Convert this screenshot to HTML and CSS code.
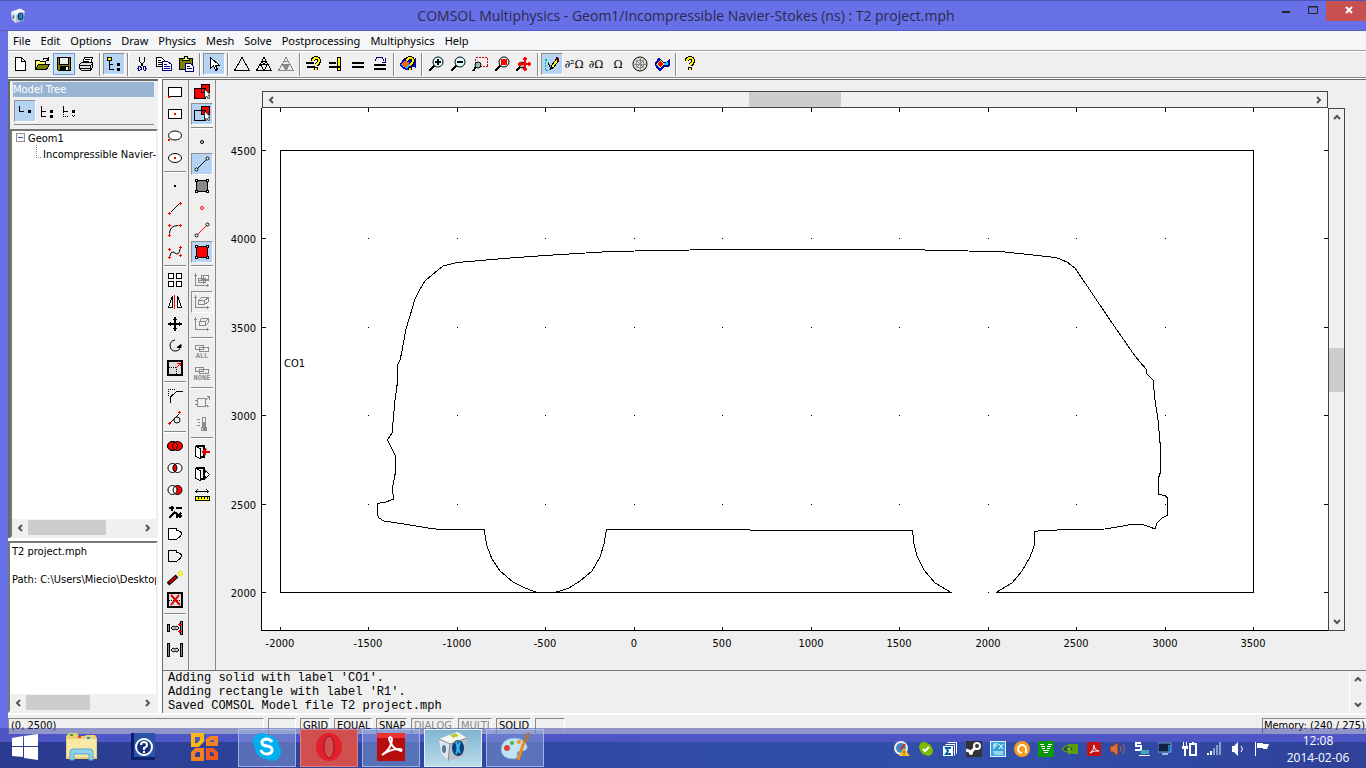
FILE: index.html
```
<!DOCTYPE html>
<html lang="en">
  <head>
    <meta charset="utf-8">
    <title>COMSOL Multiphysics - Geom1/Incompressible Navier-Stokes (ns) : T2 project.mph</title>
    <link rel="stylesheet" href="styles.css">
  </head>
  <body>
    <div class="window">
      <header class="titlebar">
        <svg class="app-icon" viewBox="0 0 32 32"><path d="M2 8L20 1l10 6-3 18-16 5-7-8z" fill="#b9c2cc"/><path d="M2 8l11 5-2 17-7-8z" fill="#dfe5ea"/><path d="M2 8L20 1l10 6-17 6z" fill="#f5f7f2"/><ellipse cx="21" cy="17" rx="6" ry="8" fill="#0b3c74"/><path d="M20 11v12M23 12v9" stroke="#2fa8e4" stroke-width="2"/><ellipse cx="7" cy="18" rx="2" ry="4" fill="#54789c"/></svg>
        <h1>COMSOL Multiphysics - Geom1/Incompressible Navier-Stokes (ns) : T2 project.mph</h1>
        <div class="window-buttons">
          <button aria-label="Minimize"><svg viewBox="0 0 10 10"><path d="M1 7h8" stroke="#222" stroke-width="2"/></svg></button>
          <button aria-label="Maximize"><svg viewBox="0 0 10 10"><path d="M.5 1.500h9v7h-9zM0 2h10" stroke="#222"/></svg></button>
          <button class="close" aria-label="Close"><svg viewBox="0 0 10 10"><path d="M2 2l6 6M8 2l-6 6" stroke="#fff" stroke-width="2"/></svg></button>
        </div>
      </header>

      <nav class="menubar">
        <button>File</button>
        <button>Edit</button>
        <button>Options</button>
        <button>Draw</button>
        <button>Physics</button>
        <button>Mesh</button>
        <button>Solve</button>
        <button>Postprocessing</button>
        <button>Multiphysics</button>
        <button>Help</button>
      </nav>

      <div class="toolbar">
        <button class="tool" aria-label="New"><svg viewBox="0 0 16 16"><path d="M3.500 1.500h6l4 4v9h-10zM9.500 1.500v4h4" fill="#fff"/></svg></button>
        <button class="tool" aria-label="Open"><svg viewBox="0 0 16 16"><path d="M1.500 13.500v-9h4l1 1h5v3" fill="#ff6"/><path d="M1.500 13.500l3-5h11l-3 5z" fill="#808000"/><path d="M9 3.500q3-3 5 0M14.500 1v3h-3"/></svg></button>
        <button class="tool hot" aria-label="Save"><svg viewBox="0 0 16 16"><path d="M1.500 1.500h13v13h-12l-1-1z" fill="#808000"/><path d="M4 2h8v6H4z" fill="#efefef" stroke="none"/><path d="M3.500 2v6h9V2"/><path d="M4 10h9v5H4z" fill="#000" stroke="none"/><path d="M10 11h2v3h-2z" fill="#fff" stroke="none"/></svg></button>
        <button class="tool" aria-label="Print"><svg viewBox="0 0 16 16"><path d="M4.500 7.500l2-6h8l-2 6" fill="#fff"/><path d="M7 3.500h5M6 5.500h5"/><path d="M1.500 8.500l2-2h11v5l-2 3h-9l-2-2zM1.500 9.500h11l2-2M12.500 9v5M2 12.500h10" fill="#ddd"/></svg></button>
        <span class="sep"></span>
        <button class="tool on" aria-label="Model tree"><svg viewBox="0 0 16 16"><path d="M1.500 1.500h4v3h-4z" fill="#ff0"/><path d="M3.500 5v8.500h4M4 8.500h3"/><path d="M11 7h2v2h-2zM11 12h2v2h-2z" fill="#000"/></svg></button>
        <span class="sep"></span>
        <button class="tool" aria-label="Cut"><svg viewBox="0 0 16 16"><path d="M5.500 1v4l4 6M10.500 1v4l-4 6"/><path d="M5 10.500l2 1v2l-2 1-1-2zM11 10.500l-2 1v2l2 1 1-2z" stroke="#000080"/></svg></button>
        <button class="tool" aria-label="Copy"><svg viewBox="0 0 16 16"><path d="M.5 1.500h5l3 3v6h-8z" fill="#fff"/><path d="M2 4.500h3M2 6.500h4M2 8.500h4"/><path d="M6.500 5.500h5l4 3v6h-9z" fill="#fff" stroke="#000080"/><path d="M8 8.500h3M8 10.500h6M8 12.500h6" stroke="#000080"/></svg></button>
        <button class="tool" aria-label="Paste"><svg viewBox="0 0 16 16"><path d="M1.500 2.500h13v11h-13z" fill="#808000"/><path d="M4.500 4.500v-2h2v-2h3v2h2v2z" fill="#ff6"/><path d="M7.500 7.500h5l3 3v5h-8z" fill="#fff" stroke="#000080"/><path d="M9 10.500h3M9 12.500h5" stroke="#000080"/></svg></button>
        <span class="sep"></span>
        <button class="tool on" aria-label="Select"><svg viewBox="0 0 16 16"><path d="M4.500 1.500v11l3-3 2 5 2-1-2-4h4z" fill="#fff"/></svg></button>
        <span class="sep"></span>
        <button class="tool" aria-label="Initialize mesh"><svg viewBox="0 0 16 16"><path d="M8 1.500L15.500 14.500H.5z"/></svg></button>
        <button class="tool" aria-label="Refine mesh"><svg viewBox="0 0 16 16"><path d="M8 1.500L15.500 14.500H.5zM4.500 8.500h7l-3.500 6z"/><path d="M6 5.500h4l-2 3z"/></svg></button>
        <button class="tool" aria-label="Refine selection"><svg viewBox="0 0 16 16"><g stroke="#888"><path d="M8 1.500L15.500 14.500H.5z"/><path d="M4.500 8.500h7l-3.500 6z" fill="#888"/><path d="M6 5h4"/></g></svg></button>
        <span class="sep"></span>
        <button class="tool" aria-label="Get initial value"><svg viewBox="0 0 16 16"><path d="M0 7h8M1 11h8" stroke-width="2"/><path class="qb" d="M7 5q0-3 3-3t3 3q0 2-3 4M10 11v3"/><path class="q" d="M7 5q0-3 3-3t3 3q0 2-3 4M10 12v2"/></svg></button>
        <button class="tool" aria-label="Update model"><svg viewBox="0 0 16 16"><path d="M1 7h7M1 11h9" stroke-width="2"/><path d="M9.500 1.500h3v9h-3zM9.500 11.500h3v3h-3z" fill="#ff0"/></svg></button>
        <button class="tool" aria-label="Solve problem"><svg viewBox="0 0 16 16"><path d="M2 7h12M2 11h12" stroke-width="2"/></svg></button>
        <button class="tool" aria-label="Restart"><svg viewBox="0 0 16 16"><path d="M2 9h12M2 13h12" stroke-width="2"/><path d="M3.500 5q0-4 4-4 4 0 4 4M13.500 2v4h-4" stroke="#000080"/></svg></button>
        <span class="sep"></span>
        <button class="tool" aria-label="Plot parameters"><svg viewBox="0 0 16 16"><path d="M0 9l3-5 3-2 3 2 6-1v8l-4-1-3 4-5-2z" fill="#00f" stroke="#009"/><path d="M1 9l4-5 6 4-4 5z" fill="#0cf" stroke="none"/><path d="M1 8l4-4 4 4-4 4z" fill="#f60" stroke="none"/><path class="qb" d="M7 5q0-3 3-3t3 3q0 2-3 4M10 11v3"/><path class="q" d="M7 5q0-3 3-3t3 3q0 2-3 4M10 12v2"/></svg></button>
        <span class="sep"></span>
        <button class="tool" aria-label="Zoom in"><svg viewBox="0 0 16 16"><circle cx="10" cy="6" r="5" fill="#dff"/><path d="M7 6h6M10 3v6" stroke-width="2"/><path d="M6 10l-5 5" stroke-width="2"/></svg></button>
        <button class="tool" aria-label="Zoom out"><svg viewBox="0 0 16 16"><circle cx="10" cy="6" r="5" fill="#dff"/><path d="M7 6h6" stroke-width="2"/><path d="M6 10l-5 5" stroke-width="2"/></svg></button>
        <button class="tool" aria-label="Zoom window"><svg viewBox="0 0 16 16"><path d="M3.500 1.500h12v9h-12z" stroke="#c00" stroke-dasharray="2 1"/><circle cx="6" cy="9" r="3" fill="#9bb"/><path d="M4 11l-3 4" stroke-width="2"/></svg></button>
        <button class="tool" aria-label="Zoom extents"><svg viewBox="0 0 16 16"><circle cx="10" cy="6" r="5" fill="#dff"/><path d="M7.500 3.500h5v5h-5z" fill="red" stroke="red"/><path d="M6 10l-5 5" stroke-width="2"/></svg></button>
        <button class="tool" aria-label="Pan"><svg viewBox="0 0 16 16"><circle cx="6" cy="9" r="3" fill="#9aa"/><path d="M4 11l-4 4" stroke-width="2"/><g stroke="red" stroke-width="2"><path d="M9 1v14M2 8h13"/><path d="M7 3h4M7 13h4M13 6v4M4 6v4"/></g></svg></button>
        <span class="sep"></span>
        <button class="tool on" aria-label="Draw mode"><svg viewBox="0 0 16 16"><path d="M1 3v11h4l3-2M2 3l6 9" stroke="#0aa" stroke-dasharray="2 1"/><path d="M7 13l1-4 5-7 2 2-5 7z" fill="#ff0"/><path d="M12 2l3 2" stroke="#600" stroke-width="3"/><path d="M4 7l3 6"/></svg></button>
        <button class="tool math" aria-label="Point mode">∂²Ω</button>
        <button class="tool math" aria-label="Boundary mode">∂Ω</button>
        <button class="tool math" aria-label="Subdomain mode">Ω</button>
        <button class="tool" aria-label="Mesh mode"><svg viewBox="0 0 16 16"><circle cx="8" cy="8" r="7" fill="#ddd"/><g stroke="#888"><path d="M8 1v14M1 8h14M3 3l10 10M13 3L3 13"/><circle cx="8" cy="8" r="4"/></g></svg></button>
        <button class="tool" aria-label="Postprocessing mode"><svg viewBox="0 0 16 16"><path d="M1 8l4-6 4 4h4l2-2v6l-5 1-4 4-3-3z" fill="#00c" stroke="#009"/><path d="M2 8l4-4 3 3 5-1v3H9l-3 4z" fill="#0df" stroke="none"/><path d="M2 8l4-4 5 4-5 4z" fill="#fe0" stroke="none"/><path d="M3 8l3-3 3 3-3 3z" fill="red" stroke="none"/></svg></button>
        <span class="sep"></span>
        <button class="tool" aria-label="Help"><svg viewBox="0 0 16 16"><path class="qb" d="M5 5q0-3 3-3t3 3q0 2-3 4M8 11v3"/><path class="q" d="M5 5q0-3 3-3t3 3q0 2-3 4M8 12v2"/></svg></button>
      </div>

      <main class="workspace">
        <aside class="sidebar">
          <section class="tree-panel">
            <h2>Model Tree</h2>
            <div class="tree-tools">
              <button class="tool on" aria-label="Overview"><svg viewBox="0 0 16 16"><path d="M2.500 3v5h4"/><path d="M11 7h3v3h-3z" class="dot"/></svg></button>
              <button class="tool" aria-label="Detail"><svg viewBox="0 0 16 16"><path d="M2.500 3v10h4M3 8.500h4"/><path d="M11 7h3v3h-3zM11 12h3v3h-3z" class="dot"/></svg></button>
              <button class="tool" aria-label="Inspect"><svg viewBox="0 0 16 16"><path d="M2.500 3v6M3 8.500h4"/><path d="M11 7h3v3h-3z" class="dot"/><path d="M2.500 9v4.500h5M11 12l3 3M14 12l-3 3" stroke-dasharray="1 1"/></svg></button>
            </div>
            <div class="tree-box">
              <ul class="tree">
                <li><span class="expander"></span>Geom1
                  <ul>
                    <li><span class="branch"></span>Incompressible Navier-S</li>
                  </ul>
                </li>
              </ul>
              <div class="hscroll">
                <svg viewBox="0 0 8 8"><path d="M6 1L3 4l3 3"/></svg>
                <div class="track"><div class="thumb tree-thumb"></div></div>
                <svg viewBox="0 0 8 8"><path d="M2 1l3 3-3 3"/></svg>
              </div>
            </div>
          </section>
          <section class="info-box">
            <p>T2 project.mph</p>
            <p>Path: C:\Users\Miecio\Desktop</p>
            <div class="hscroll">
              <svg viewBox="0 0 8 8"><path d="M6 1L3 4l3 3"/></svg>
              <div class="track"><div class="thumb info-thumb"></div></div>
              <svg viewBox="0 0 8 8"><path d="M2 1l3 3-3 3"/></svg>
            </div>
          </section>
        </aside>

        <div class="content">
          <div class="editor">
            <div class="palette">
              <button class="tool" aria-label="Rectangle"><svg viewBox="0 0 16 16"><path d="M1.500 3.500h13v9h-13z" fill="#fff"/><path d="M1 12h2v2H1z" class="red"/></svg></button>
              <button class="tool" aria-label="Centered rectangle"><svg viewBox="0 0 16 16"><path d="M1.500 3.500h13v9h-13z" fill="#fff"/><path d="M7 7h2v2H7z" class="red"/></svg></button>
              <button class="tool" aria-label="Ellipse"><svg viewBox="0 0 16 16"><ellipse cx="8" cy="7.500" rx="6.500" ry="4.500" fill="#fff"/><path d="M1 11h2v2H1z" class="red"/></svg></button>
              <button class="tool" aria-label="Centered ellipse"><svg viewBox="0 0 16 16"><ellipse cx="8" cy="8" rx="6.500" ry="4.500" fill="#fff"/><path d="M7 7h2v2H7z" class="red"/></svg></button>
              <span class="sep"></span>
              <button class="tool" aria-label="Point"><svg viewBox="0 0 16 16"><path d="M7 7h2v2H7z" class="dot"/></svg></button>
              <button class="tool" aria-label="Line"><svg viewBox="0 0 16 16"><path d="M1 13.500h3M2.500 12v3M12 3.500h3M13.500 2v3" stroke="red"/><path d="M4 12l8-8" class="smooth"/></svg></button>
              <button class="tool" aria-label="2nd degree curve"><svg viewBox="0 0 16 16"><path d="M1 13.500h3M2.500 12v3M1 3.500h3M2.500 2v3M12 3.500h3M13.500 2v3" stroke="red"/><path d="M2.500 11.500q0-8 9-8" class="smooth"/></svg></button>
              <button class="tool" aria-label="3rd degree curve"><svg viewBox="0 0 16 16"><path d="M1 13.500h3M2.500 12v3M1 5.500h3M2.500 4v3M12 3.500h3M13.500 2v3M12 11.500h3M13.500 10v3" stroke="red"/><path d="M3 12q1-6 5-3t5-4" class="smooth"/></svg></button>
              <span class="sep"></span>
              <button class="tool" aria-label="Array"><svg viewBox="0 0 16 16"><path d="M1.500 1.500h5v5h-5zM9.500 1.500h5v5h-5zM1.500 9.500h5v5h-5zM9.500 9.500h5v5h-5z" fill="#fff"/></svg></button>
              <button class="tool" aria-label="Mirror"><svg viewBox="0 0 16 16"><path d="M5.500 2v11.500h-4zM10.500 2v11.500h4z" fill="#fff"/><path d="M7.500 1v14" stroke="red"/></svg></button>
              <button class="tool" aria-label="Move"><svg viewBox="0 0 16 16"><path d="M8 1v14M1 8h14" stroke-width="2"/><path d="M6 3.500h4M6 12.500h4M3.500 6v4M12.500 6v4"/></svg></button>
              <button class="tool" aria-label="Rotate"><svg viewBox="0 0 16 16"><path d="M8 2Q3 3 3 8q1 5 5 5 5 0 5-4" class="smooth"/><path d="M10 9.500h4v-3z" fill="#000" class="smooth"/></svg></button>
              <button class="tool" aria-label="Scale"><svg viewBox="0 0 16 16"><path d="M1 1h14v14H1z" fill="#ddd" stroke-width="2"/><path d="M2 7.500h7v7" stroke-dasharray="1 1"/><path d="M9 8l5-5M10 3h3v3" stroke="red"/></svg></button>
              <span class="sep"></span>
              <button class="tool" aria-label="Fillet"><svg viewBox="0 0 16 16"><path d="M3.500 15V9l6-5.500h6"/><path d="M1.500 8V1.500h7" stroke-dasharray="1 1"/></svg></button>
              <button class="tool" aria-label="Tangent"><svg viewBox="0 0 16 16"><path d="M1 13.500h3M2.500 12v3M11 2.500h3M12.500 1v3" stroke="red"/><path d="M3 13l9-9" class="smooth"/><circle cx="10" cy="10" r="3"/></svg></button>
              <span class="sep"></span>
              <button class="tool" aria-label="Union"><svg viewBox="0 0 16 16"><ellipse cx="5.500" cy="8" rx="5" ry="4.500" fill="red"/><ellipse cx="10.500" cy="8" rx="5" ry="4.500" fill="red"/><ellipse cx="5.500" cy="8" rx="5" ry="4.500"/></svg></button>
              <button class="tool" aria-label="Intersection"><svg viewBox="0 0 16 16"><circle cx="5.500" cy="8" r="4.500" fill="#fff"/><circle cx="10.500" cy="8" r="4.500" fill="#fff"/><path d="M8 4q4 4 0 8-4-4 0-8" fill="red" class="smooth"/></svg></button>
              <button class="tool" aria-label="Difference"><svg viewBox="0 0 16 16"><circle cx="10.500" cy="8" r="4.500" fill="red"/><circle cx="5.500" cy="8" r="4.500" fill="#fff"/><path d="M8 4q-4 4 0 8" class="smooth"/></svg></button>
              <button class="tool" aria-label="Create composite object"><svg viewBox="0 0 16 16"><path d="M2 4h5M4.500 2v5M9 4h6M2 14l6-6M9 9l5 5M14 9l-5 5M9 11.500h6" stroke-width="2"/></svg></button>
              <button class="tool" aria-label="Coerce to solid"><svg viewBox="0 0 16 16"><path d="M1.500 2.500h8v2q5 0 5 4-1 2-5 5h-8z" fill="#fff"/></svg></button>
              <button class="tool" aria-label="Coerce to curve"><svg viewBox="0 0 16 16"><path d="M1.500 2.500h8v2q5 0 5 4-1 2-5 5h-8z"/></svg></button>
              <button class="tool" aria-label="Repair"><svg viewBox="0 0 16 16"><path d="M1 14l9-8" stroke-width="4" class="smooth"/><path d="M2 13l7-6" stroke="#d00" stroke-width="2" class="smooth"/><path d="M12 1h2v1h1v2h-1v1h-2V4h-1V2h1zM9.500 3v1M15.500 2v2M13 6v1" stroke="#ee0"/></svg></button>
              <button class="tool" aria-label="Delete interior boundaries"><svg viewBox="0 0 16 16"><path d="M1 1h14v14H1z" fill="#ddd" stroke-width="2"/><path d="M2 8h12" stroke-dasharray="1 1"/><path d="M4 3l9 10M12 3L4 13" stroke="#d00" stroke-width="2" class="smooth"/></svg></button>
              <span class="sep"></span>
              <button class="tool" aria-label="Create pairs"><svg viewBox="0 0 16 16"><path d="M.5 4.500h2v7h-2zM13.500 1.500h2v13h-2z" fill="#888"/><path d="M4 8l2-2 2 1 2-1 2 2-2 2-2-1-2 1z" fill="#ccc" class="smooth"/><path d="M11 4.500h4M11 11.500h4M12.500 3v3M12.500 10v3" stroke="red"/></svg></button>
              <button class="tool" aria-label="Imprint"><svg viewBox="0 0 16 16"><path d="M.5 1.500h2v13h-2zM13.500 1.500h2v13h-2z" fill="#888"/><path d="M4 8l2-2 2 1 2-1 2 2-2 2-2-1-2 1z" fill="#ccc" class="smooth"/></svg></button>
            </div>

            <div class="palette">
              <button class="tool" aria-label="Solid selection"><svg viewBox="0 0 16 16"><path d="M7.500.5h8v8h-8zM.5 4.500h11v10H.5zM7.500 4.500v4h4" fill="red"/><path d="M10.500 5v9l2-2 2 3 1-1-1-3h2z" fill="#fff" stroke="#333" class="smooth"/></svg></button>
              <button class="tool on" aria-label="Overlap selection"><svg viewBox="0 0 16 16"><path d="M7.500.5h8v8h-8z" fill="red"/><path d="M.5 4.500h11v10H.5z"/><path d="M10.500 5v9l2-2 2 3 1-1-1-3h2z" fill="#fff" stroke="#333" class="smooth"/></svg></button>
              <span class="sep"></span>
              <button class="tool" aria-label="Points"><svg viewBox="0 0 16 16"><circle cx="8" cy="8" r="1.500"/></svg></button>
              <button class="tool on" aria-label="Edges"><svg viewBox="0 0 16 16"><path d="M3 13L13 3" class="smooth"/><circle cx="2.500" cy="13.500" r="1.500" fill="#fff"/><circle cx="13.500" cy="2.500" r="1.500" fill="#fff"/></svg></button>
              <button class="tool" aria-label="Faces"><svg viewBox="0 0 16 16"><path d="M2.500 2.500h11v11h-11z" fill="#888"/><path class="corners" d="M1.500 1.500h2v2h-2zM12.500 1.500h2v2h-2zM1.500 12.500h2v2h-2zM12.500 12.500h2v2h-2z"/></svg></button>
              <button class="tool" aria-label="Select points"><svg viewBox="0 0 16 16"><circle cx="8" cy="8" r="1.500" stroke="red"/></svg></button>
              <button class="tool" aria-label="Select edges"><svg viewBox="0 0 16 16"><path d="M3 13L13 3" stroke="red" class="smooth"/><circle cx="2.500" cy="13.500" r="1.500" fill="#fff"/><circle cx="13.500" cy="2.500" r="1.500" fill="#fff"/></svg></button>
              <button class="tool on" aria-label="Select faces"><svg viewBox="0 0 16 16"><path d="M2.500 2.500h11v11h-11z" fill="red"/><path class="corners" d="M1.500 1.500h2v2h-2zM12.500 1.500h2v2h-2zM1.500 12.500h2v2h-2zM12.500 12.500h2v2h-2z"/></svg></button>
              <span class="sep"></span>
              <button class="tool" aria-label="Grid" disabled><svg viewBox="0 0 16 16"><path d="M1.500 1v12.500H15M0 3h3M13 12v3M4.500 6.500h7v4h-7zM7.500 3.500h7v4h-7zM4 8.500h11M9.500 3v9"/></svg></button>
              <button class="tool framed" aria-label="Box" disabled><svg viewBox="0 0 16 16"><path d="M1.500 1v12.500H15M0 3h3M13 12v3M4.500 6.500h6v4h-6zM4.500 6.500l3-3h7l-4 3M14.500 3.500v4l-4 3"/></svg></button>
              <button class="tool" aria-label="Solid box" disabled><svg viewBox="0 0 16 16"><path d="M1.500 1v12.500H15M0 3h3M13 12v3M5.500 5.500h6v4h-6zM5.500 5.500l2-3h7l-3 3M14.500 2.500v4l-3 3"/></svg></button>
              <span class="sep"></span>
              <button class="tool captioned" disabled><svg viewBox="0 0 16 9"><path d="M1.500 1.500h8v4h-8zM5.500 3.500h9v4h-9z"/></svg>ALL</button>
              <button class="tool captioned" disabled><svg viewBox="0 0 16 9"><path d="M1.500 1.500h8v4h-8zM5.500 3.500h9v4h-9z"/></svg>NONE</button>
              <span class="sep"></span>
              <button class="tool" aria-label="Export geometry" disabled><svg viewBox="0 0 16 16"><path d="M3.500 4.500h8v8h-8zM1 6.500h2M1 10.500h2M12 6l3-3M12.500 2.500h3v3M12 11l3 2"/></svg></button>
              <button class="tool" aria-label="Scene light" disabled><svg viewBox="0 0 16 16"><path d="M8.500 1.500h3v10h-3zM7.500 11.500h5v3h-5zM3 3.500h3M4 6.500h2M3 9.500h3"/><path d="M10 6v8" stroke-width="3"/></svg></button>
              <span class="sep"></span>
              <button class="tool" aria-label="Exit draw"><svg viewBox="0 0 16 16"><path d="M1.500 1.500h8v11h-3M9.500 3v9" stroke-width="2"/><path d="M1.500 2.500l5 2v10l-5-2z" fill="#fff"/><path d="M9 8h7M12 5L9 8l3 3" stroke="#d00" stroke-width="2"/></svg></button>
              <button class="tool" aria-label="Leave"><svg viewBox="0 0 16 16"><path d="M1.500 1.500h8v11h-3M9.500 3v9" stroke-width="2"/><path d="M1.500 2.500l5 2v10l-5-2z" fill="#fff"/><path d="M10.500 6.500h1v-2l4 4-4 4v-2h-1z" fill="#fff" class="smooth"/></svg></button>
              <button class="tool" aria-label="Measure"><svg viewBox="0 0 16 16"><path d="M1 3.500h14M3.500 1.500l-2 2 2 2M12.500 1.500l2 2-2 2"/><path d="M1.500 8.500h14v4h-14z" fill="#ff0"/><path d="M4.500 9v2M7.500 9v2M10.500 9v2M13.500 9v2"/></svg></button>
            </div>

            <div class="canvas">
              <div class="hscroll plot-h">
                <svg viewBox="0 0 8 8"><path d="M6 1L3 4l3 3"/></svg>
                <div class="track"><div class="thumb"></div></div>
                <svg viewBox="0 0 8 8"><path d="M2 1l3 3-3 3"/></svg>
              </div>
              <svg class="plot" viewBox="261 108 1067 523">
                <g id="grid"></g>
                <g class="outline">
                  <path d="M951.500 592.500H280.500V150.500H1253.500V592.500H996.500"/>
                  <path d="M537 592.500L525 588 513 582 500 571 492 559 487 546 485 535 484.500 529.500H440L428 528 410 525 397 523 384 521 379 518 377.500 515V503.500L386 502 393.500 499 392.500 488 395.500 472V456L390 445 387.500 440 392 433 395 400 397.500 382 397 366 400 360 402 351 406 329 410 316 415 299 420 289 425 281 432 275 443 266 457 262.500 510 258 545 255.500 610 251.500 660 250.500 720 249.500H900L950 250.500 1005 252 1056 257.500 1067 262 1075 268 1110 320 1135 356 1140 362 1146 369 1147 374 1153 380 1155 400 1158 420 1160.500 448V472L1158.500 478V494.500L1165 495.500 1167.500 498V515.500L1162 518 1157 523 1155 529 1150 527 1142 524.500H1131L1123 526 1105 529 1072 529.500 1042 530.500 1034.500 531.500V545L1030 557 1022 571 1012 583 996 592.500"/>
                  <path d="M555 592.500L569 588 580 581 592 571 600 557 604 544 606.500 529.500H740L760 530.500H912.500L914 544 917 556 924 570 935 583 951 592.500"/>
                </g>
                <text x="284" y="367">CO1</text>
              </svg>
              <div class="vscroll plot-v">
                <svg viewBox="0 0 8 8"><path d="M1 6l3-3 3 3"/></svg>
                <div class="track"><div class="thumb"></div></div>
                <svg viewBox="0 0 8 8"><path d="M1 2l3 3 3-3"/></svg>
              </div>
            </div>
          </div>

          <div class="log">
            <pre>Adding solid with label 'CO1'.
Adding rectangle with label 'R1'.
Saved COMSOL Model file T2 project.mph</pre>
            <div class="vscroll">
              <svg viewBox="0 0 8 8"><path d="M1 6l3-3 3 3"/></svg>
              <svg viewBox="0 0 8 8"><path d="M1 2l3 3 3-3"/></svg>
            </div>
          </div>
        </div>
      </main>

      <footer class="statusbar">
        <span>(0, 2500)</span>
        <span></span>
        <span>GRID</span>
        <span>EQUAL</span>
        <span>SNAP</span>
        <span class="off">DIALOG</span>
        <span class="off">MULTI</span>
        <span>SOLID</span>
        <span></span>
        <span class="memory">Memory: (240 / 275)</span>
      </footer>
    </div>

    <div class="taskbar">
      <button class="start" aria-label="Start"><svg viewBox="0 0 26 26"><path d="M0 4l11-2v10H0zM12 2l14-2v12H12zM0 13h11v10L0 22zM12 13h14v13l-14-2z" fill="#fff"/></svg></button>
      <button class="task" aria-label="File Explorer"><svg viewBox="0 0 32 32"><path d="M1 5l3-3h8l2 3h6l1-1h9l2 3v21H1z" fill="#e9cf74"/><path d="M5 3h3v2H5z" fill="#2a4"/><path d="M13 5h3v2h-3z" fill="#d43"/><path d="M22 6h3v2h-3z" fill="#28d"/><path d="M2 8h29v18H2z" fill="#f8e9a6"/><path d="M5 29v-8q0-3 3-3h17q3 0 3 3v8h-4v-6H9v6z" fill="#8fd0ec" stroke="#5aa5cd"/></svg></button>
      <button class="task" aria-label="Help"><svg viewBox="0 0 32 32"><path d="M4 2h24v27H4z" fill="#0c1f6a"/><path d="M7 2h21v24H7z" fill="#2853a8"/><circle cx="17" cy="16" r="8" fill="#14307c" stroke="#fff" stroke-width="2"/><path d="M14 14q0-3 3-3t3 3q0 2-3 3v2M17 20v2" stroke="#fff" stroke-width="2" fill="none"/></svg></button>
      <button class="task" aria-label="Office"><svg viewBox="0 0 32 32" fill="none" stroke-width="4"><path d="M4 4h9v6l-4 4H4z" stroke="#fdb714"/><path d="M19 13v-4l3-2h5v6z" stroke="#f58220"/><path d="M13 19v9H4v-6l3-3z" stroke="#f58220"/><path d="M19 19h5l3 3v5h-8z" stroke="#ee5a24"/></svg></button>
      <button class="task open" aria-label="Skype"><svg viewBox="0 0 32 32"><circle cx="11" cy="11" r="9" fill="#00aff0"/><circle cx="21" cy="21" r="9" fill="#00aff0"/><circle cx="16" cy="16" r="12" fill="#00aff0"/><path d="M21 11q-2-3-6-3-5 1-4 4 1 3 5 3 6 1 5 5-1 3-5 3-5 0-6-4" fill="none" stroke="#fff" stroke-width="3"/></svg></button>
      <button class="task open opera" aria-label="Opera"><svg viewBox="0 0 32 32"><ellipse cx="16" cy="16" rx="13" ry="14" fill="#e2202c"/><ellipse cx="16" cy="16" rx="5" ry="11" fill="#d05050" stroke="#a01020"/></svg></button>
      <button class="task open" aria-label="Adobe Reader"><svg viewBox="0 0 32 32"><path d="M2 2h28v28H2z" fill="#b80d0d"/><path d="M2 2h28v5H2z" fill="#e33"/><path d="M7 24q10-7 10-16-2-4-3 0 3 10 12 12 2-2-2-2-9 0-17 6z" fill="none" stroke="#fff" stroke-width="2"/></svg></button>
      <button class="task open active" aria-label="COMSOL"><svg viewBox="0 0 32 32"><path d="M2 8L20 1l10 6-3 18-16 5-7-8z" fill="#b9c2cc"/><path d="M2 8l11 5-2 17-7-8z" fill="#dfe5ea"/><path d="M2 8L20 1l10 6-17 6z" fill="#f5f7f2"/><path d="M13 4l6-2 3 3-6 2z" fill="#b8cf3c"/><ellipse cx="21" cy="17" rx="6" ry="8" fill="#0b3c74"/><path d="M19 11q3 6 0 12M23 11q-3 6 0 11" stroke="#2fb8f4" stroke-width="2" fill="none"/><ellipse cx="7" cy="18" rx="2" ry="4" fill="#54789c"/><path d="M2 8l11 5 17-6M13 13l-2 17" stroke="#7e8994" fill="none"/></svg></button>
      <button class="task open" aria-label="Paint"><svg viewBox="0 0 32 32"><path d="M15 7Q2 8 2 19q1 9 13 9 5-1 3-5 0-3 4-3 7 0 6-5-3-8-13-8z" fill="#c3e3f5" stroke="#7db0d4"/><circle cx="8" cy="17" r="3" fill="#d43"/><circle cx="13" cy="12" r="2" fill="#4b3"/><circle cx="20" cy="11" r="2" fill="#f90"/><path d="M19 29l6-18" stroke="#ec8b1e" stroke-width="3"/><path d="M24 11l2-8 5-2-2 10z" fill="#9b7a55"/></svg></button>
      <div class="tray">
        <svg viewBox="0 0 16 16"><circle cx="7" cy="7" r="7" fill="#eee"/><circle cx="7" cy="7" r="5" fill="#48b"/><path d="M7 8L11 3" stroke="#d22" stroke-width="2"/><path d="M10 7l6 8H5z" fill="#fb2"/><path d="M10 10v2M10 13v1" stroke="#333"/></svg>
        <svg viewBox="0 0 16 16"><circle cx="6" cy="6" r="5" fill="#7fba00"/><circle cx="10" cy="10" r="5" fill="#7fba00"/><circle cx="8" cy="8" r="6" fill="#7fba00"/><path d="M5 8l2 2 4-4" fill="none" stroke="#fff" stroke-width="2"/></svg>
        <svg viewBox="0 0 16 16"><path d="M5.500 1.500h9v11M3.500 3.500h9v11" fill="none" stroke="#fff"/><path d="M1 5h10v10H1z" fill="#fff"/><path d="M9 7H4l2 3-2 3h5" fill="none" stroke="#06a" stroke-width="2"/></svg>
        <svg viewBox="0 0 16 16"><path d="M0 0h16v16H0z" fill="#333"/><circle cx="11" cy="5" r="3" fill="#333" stroke="#fff" stroke-width="2"/><path d="M0 9l5 2 4-4" fill="none" stroke="#fff" stroke-width="3"/><circle cx="5" cy="12" r="2" fill="#fff"/></svg>
        <svg viewBox="0 0 16 16"><path d="M0 0h16v16H0z" fill="#dff2fc"/><path d="M1 1h14v14H1z" fill="#38a5dd"/><path d="M4 3v5M4 3h4M4 5h3M9 3l4 5M13 3L9 8M3 11h10M4 13h9" stroke="#fff"/></svg>
        <svg viewBox="0 0 16 16"><circle cx="8" cy="8" r="8" fill="#f79a1e"/><path d="M8 12a4 4 0 1 1 4-4v4" fill="none" stroke="#fff" stroke-width="2"/></svg>
        <svg viewBox="0 0 16 16"><path d="M0 0h16v16H0z" fill="#0a970a"/><path d="M2 3.500h4M10 3.500h4M3 5.500h4M9 5.500h4M4 7.500h3M9 7.500h3M5 9.500h6M6 11.500h4" stroke="#fff"/></svg>
        <svg viewBox="0 0 16 16"><path d="M6 3h10v10H6z" fill="#5a9a10"/><path d="M0 8q6-7 12 0-6 6-12 0z" fill="#234a50" stroke="#76b900"/><circle cx="7" cy="8" r="2" fill="#76b900"/></svg>
        <svg viewBox="0 0 16 16"><path d="M1 1h14v14H1z" fill="#c41212"/><path d="M4 12q5-4 4-8 0 5 5 6-5-1-9 2z" fill="none" stroke="#fff"/></svg>
        <svg viewBox="0 0 16 16"><path d="M0 5h3l5-4v14l-5-4H0z" fill="#e0703c" stroke="#733"/><path d="M10 5q2 3 0 6M13 3q3 5 0 10" fill="none" stroke="#a65"/></svg>
        <svg viewBox="0 0 16 16"><path d="M7 2H2v3h5v4H1" fill="none" stroke="#fff" stroke-width="2"/><path d="M7 9h8v4H7z" fill="#4ab"/><path d="M5 14.500h11" stroke="#fff"/></svg>
        <svg viewBox="0 0 16 16"><path d="M0 2h13v9H0z" fill="#124" stroke="#6ac"/><path d="M4 13h6" stroke="#9bd" stroke-width="2"/><path d="M13 4q-5 3 0 8M10 4q5 4 0 8" fill="none" stroke="#3af"/></svg>
        <svg viewBox="0 0 16 16"><path d="M8 3h6v11H8z" fill="none" stroke="#fff" stroke-width="2"/><path d="M10 1h2v2h-2zM1 1h1v4H1zM4 1h1v4H4zM0 5h6v3H4v7H2V8H0z" fill="#fff"/></svg>
        <svg viewBox="0 0 16 16"><path d="M1 12h2v2H1zM4 10h2v4H4z" fill="#fff"/><path d="M7 7h2v7H7zM10 4h2v10h-2zM13 1h2v13h-2z" fill="#8b9dcc"/></svg>
        <svg viewBox="0 0 16 16"><path d="M2 5h2l4-4v14l-4-4H2z" fill="#fff"/><path d="M11 5q3 3 0 6" fill="none" stroke="#fff"/></svg>
        <svg viewBox="0 0 16 16"><path d="M1.500 1v14" stroke="#fff"/><path d="M3 2h6v1h6l-2 5H9V7H3z" fill="#fff"/></svg>
      </div>
      <div class="clock"><time>12:08</time><time>2014-02-06</time></div>
    </div>

    <script>
      var xTicks = [280, 368, 457, 545, 634, 722, 811, 899, 988, 1076, 1165, 1253];
      var yTicks = [592, 504, 415, 327, 238, 150];
      var lines = "";
      var dots = "";
      var labels = "";

      xTicks.forEach(function (x, i) {
        lines += "M" + x + ".5 108v4M" + x + ".5 627v4";
        labels += '<text class="x-label" x="' + x + '" y="647">' + (i * 500 - 2000) + "</text>";
        yTicks.forEach(function (y) {
          dots += "M" + x + " " + y + ".5h1";
        });
      });

      yTicks.forEach(function (y, i) {
        lines += "M261 " + y + ".5h5M1324 " + y + ".5h4";
        labels += '<text class="y-label" x="256" y="' + (y + 5) + '">' + (i * 500 + 2000) + "</text>";
      });

      document.getElementById("grid").innerHTML =
        '<path d="M261.5 108V630.5H1328' + lines + dots + '"/>' + labels;
    </script>
  </body>
</html>
```

FILE: styles.css
```
* {
  box-sizing: border-box;
}

body {
  margin: 0;
  min-height: 100vh;
  display: flex;
  flex-direction: column;
  overflow: hidden;
  background: linear-gradient(to right, #243c82, #2f5db0 50%, #3061b4 75%, #2d4690);
  font-family: "DejaVu Sans Condensed", "DejaVu Sans", sans-serif;
  font-size: 11px;
  color: #000;
}

h1,
h2,
p,
ul,
pre {
  margin: 0;
  padding: 0;
}

button {
  padding: 0;
  border: 0;
  background: none;
  color: inherit;
  font: inherit;
}

.window {
  flex: 1;
  display: flex;
  flex-direction: column;
  padding: 0 0 8px 8px;
  background: #6870e8;
  border-top: 1px solid #4c54b4;
}

/* Title bar */
.titlebar {
  display: flex;
  align-items: center;
  height: 30px;
  margin-left: -8px;
  border-bottom: 1px solid #5960c4;
}

.app-icon {
  width: 16px;
  height: 16px;
  margin-left: 10px;
}

.titlebar h1 {
  flex: 1;
  padding-left: 74px;
  text-align: center;
  font-family: "Open Sans", sans-serif;
  font-size: 14px;
  font-weight: normal;
  color: #2a2a4a;
}

.window-buttons {
  display: flex;
  align-self: flex-start;
}

.window-buttons button {
  width: 27px;
  height: 20px;
}

.window-buttons .close {
  width: 40px;
  padding-left: 6px;
  background: #c75050;
}

.window-buttons svg {
  width: 10px;
  height: 10px;
  fill: none;
}

/* Menu */
.menubar {
  display: flex;
  height: 20px;
  background: #f5f6f8;
  border-bottom: 1px solid #a0a0a0;
}

.menubar button {
  padding: 0 5px;
  font-family: "Noto Sans", sans-serif;
}

/* Toolbars */
.toolbar {
  display: flex;
  height: 27px;
  padding: 1px 0 1px 1px;
  background: #efefef;
  border-top: 1px solid #fff;
  border-bottom: 1px solid #888;
}

.tool {
  flex: none;
  display: flex;
  align-items: center;
  justify-content: center;
  width: 22px;
  height: 22px;
  border: 1px solid transparent;
}

.tool svg {
  width: 16px;
  height: 16px;
  fill: none;
  stroke: #000;
  shape-rendering: crispEdges;
}

.tool circle,
.tool ellipse,
.tool .smooth {
  shape-rendering: auto;
}

.tool.on {
  background: #b5d4f3;
  border-color: #909090 #fff #fff #909090;
}

.tool.hot {
  background: #c8e0f6;
  border-color: #6aa0dc;
}

.tool.framed {
  border-color: #909090 #fff #fff #909090;
}

.tool:disabled svg {
  stroke: #8a8a8a;
}

.tool .qb {
  stroke-width: 4;
}

.tool .q {
  stroke: #fe0;
  stroke-width: 2;
}

.tool .red {
  fill: red;
  stroke: none;
}

.tool .dot {
  fill: #000;
  stroke: none;
}

.tool .corners {
  fill: #fff;
}

.tool.math {
  font-family: "DejaVu Serif", serif;
  font-size: 11px;
}

.tool.captioned {
  flex-direction: column;
  font-family: "Liberation Mono", monospace;
  font-size: 7px;
  line-height: 7px;
  font-weight: bold;
  color: #8a8a8a;
}

.captioned svg {
  height: 9px;
}

.sep {
  flex: none;
  width: 6px;
  border-left: 2px solid #efefef;
  border-right: 2px solid #efefef;
  background: linear-gradient(to right, #888 50%, #fff 50%);
}

/* Workspace */
.workspace {
  flex: 1;
  display: flex;
  min-height: 0;
  border-top: 1px solid #fff;
  background: #fff;
}

.sidebar {
  display: flex;
  flex-direction: column;
  gap: 3px;
  width: 150px;
  margin-right: 4px;
}

.tree-panel {
  flex: 1;
  display: flex;
  flex-direction: column;
  min-height: 0;
  background: #efefef;
  border-top: 2px solid #696969;
  border-left: 2px solid #696969;
}

.tree-panel h2 {
  height: 15px;
  margin: 1px 4px 3px 3px;
  background: #9ab4d4;
  color: #fff;
  font-size: 11px;
  line-height: 15px;
  font-weight: normal;
}

.tree-tools {
  display: flex;
  height: 25px;
  margin: 0 4px 4px;
  border-bottom: 1px solid #888;
}

.tree-box,
.info-box {
  display: flex;
  flex-direction: column;
  overflow: hidden;
  background: #fff;
  border: 2px solid;
  border-color: #777 #efefef #efefef #777;
}

.tree-box {
  flex: 1;
}

.info-box {
  height: 172px;
}

.tree {
  flex: 1;
  list-style: none;
  padding-left: 4px;
  line-height: 16px;
  white-space: nowrap;
}

.tree ul {
  list-style: none;
  padding-left: 20px;
}

.expander {
  display: inline-block;
  width: 9px;
  height: 9px;
  margin-right: 3px;
  border: 1px solid #919191;
  background: linear-gradient(#3a5fb0, #3a5fb0) center / 5px 1px no-repeat #f4f4f4;
}

.branch {
  display: inline-block;
  width: 5px;
  height: 13px;
  margin: -8px 2px 0 0;
  border-left: 1px dotted #888;
  border-bottom: 1px dotted #888;
}

.info-box p {
  height: 28px;
  padding-left: 2px;
  line-height: 18px;
  white-space: nowrap;
}

.info-box .hscroll {
  margin-top: auto;
}

/* Scroll bars */
.hscroll,
.vscroll {
  flex: none;
  display: flex;
  align-items: center;
  background: #f0f0f0;
}

.hscroll {
  height: 17px;
  padding: 1px 0;
}

.hscroll > svg,
.vscroll > svg {
  flex: none;
  width: 8px;
  height: 8px;
  margin: 4px;
  fill: none;
  stroke: #555;
  stroke-width: 2;
}

.vscroll {
  flex-direction: column;
  width: 17px;
}

.track {
  flex: 1;
  align-self: stretch;
}

.hscroll .thumb {
  height: 100%;
  background: #cdcdcd;
}

.tree-thumb {
  width: 70%;
}

.info-thumb {
  width: 56%;
}

.content {
  flex: 1;
  display: flex;
  flex-direction: column;
  min-width: 0;
  border-top: 1px solid #696969;
  border-left: 1px solid #696969;
  background: #efefef;
}

.editor {
  flex: 1;
  display: flex;
  min-height: 0;
}

.palette {
  width: 26px;
  padding: 1px 1px 0;
  border-right: 1px solid #888;
}

.palette + .palette {
  width: 27px;
  padding-left: 2px;
}

.palette .sep {
  display: block;
  width: 22px;
  height: 6px;
  border: 0;
  border-top: 2px solid #efefef;
  border-bottom: 2px solid #efefef;
  background: linear-gradient(#888 50%, #fff 50%);
}

/* Geometry plot */
.canvas {
  flex: 1;
  display: grid;
  grid-template-columns: 1fr 17px;
  grid-template-rows: 17px 1fr;
  min-width: 0;
  padding: 11px 21px 39px 45px;
}

.plot {
  grid-row: 2;
  width: 100%;
  height: 100%;
  min-height: 0;
  overflow: visible;
  background: #fff;
}

.plot path {
  fill: none;
  stroke: #000;
  shape-rendering: crispEdges;
}

.plot text {
  font-size: 11px;
}

.plot .x-label {
  text-anchor: middle;
}

.plot .y-label {
  text-anchor: end;
}

.plot-h,
.plot-v {
  border: 1px solid #444;
}

.plot-h {
  padding: 0;
  margin-left: 1px;
}

.plot-h .thumb {
  width: 9%;
  margin-left: 45.5%;
}

.plot-v {
  grid-row: 2;
  grid-column: 2;
}

.plot-v .track {
  display: flex;
  flex-direction: column;
}

.plot-v .thumb {
  height: 9%;
  margin: auto 0;
  background: #cdcdcd;
}

/* Message log */
.log {
  display: flex;
  justify-content: space-between;
  height: 43px;
  border-top: 1px solid #777;
}

.log pre {
  padding-left: 5px;
  font-family: "Liberation Mono", monospace;
  font-size: 12px;
  line-height: 14px;
}

.log .vscroll {
  justify-content: space-between;
  border-left: 1px solid #fff;
}

/* Status bar */
.statusbar {
  display: grid;
  grid-template-columns: 256px 28px 30px 38px 31px 43px 34px 35px 30px 1fr;
  gap: 4px;
  height: 21px;
  padding-top: 3px;
  background: #efefef;
  border-top: 2px solid #fff;
}

.statusbar span {
  padding-left: 2px;
  border: 1px solid;
  border-color: #888 #fff #efefef #888;
  line-height: 14px;
  white-space: nowrap;
}

.statusbar .off {
  color: #888;
}

.statusbar .memory {
  justify-self: end;
  padding-left: 1px;
}

/* Taskbar, lies over the lower edge of the window */
.taskbar {
  position: relative;
  display: flex;
  height: 40px;
  margin-top: -14px;
  background: rgba(50, 60, 160, 0.5);
}

.start {
  width: 50px;
}

.start svg {
  width: 26px;
  height: 26px;
}

.task {
  width: 58px;
  margin: 1px 2px;
  border: 1px solid transparent;
}

.task svg {
  width: 32px;
  height: 32px;
}

.task.open {
  background: rgba(150, 180, 225, 0.4);
  border-color: rgba(190, 205, 240, 0.7);
}

.task.opera {
  background: #d05050;
  border-color: #e08080;
}

.task.active {
  background: linear-gradient(#82b4d2, #b9dcea);
  border-color: #e0f0f8;
}

.tray {
  display: flex;
  align-items: center;
  gap: 8px;
  margin-left: auto;
  padding-top: 2px;
}

.tray svg {
  width: 16px;
  height: 16px;
}

.clock {
  display: flex;
  flex-direction: column;
  width: 96px;
  padding-top: 4px;
  text-align: center;
  color: #fff;
  font-family: "Open Sans", sans-serif;
  font-size: 12px;
  line-height: 17px;
}
```
